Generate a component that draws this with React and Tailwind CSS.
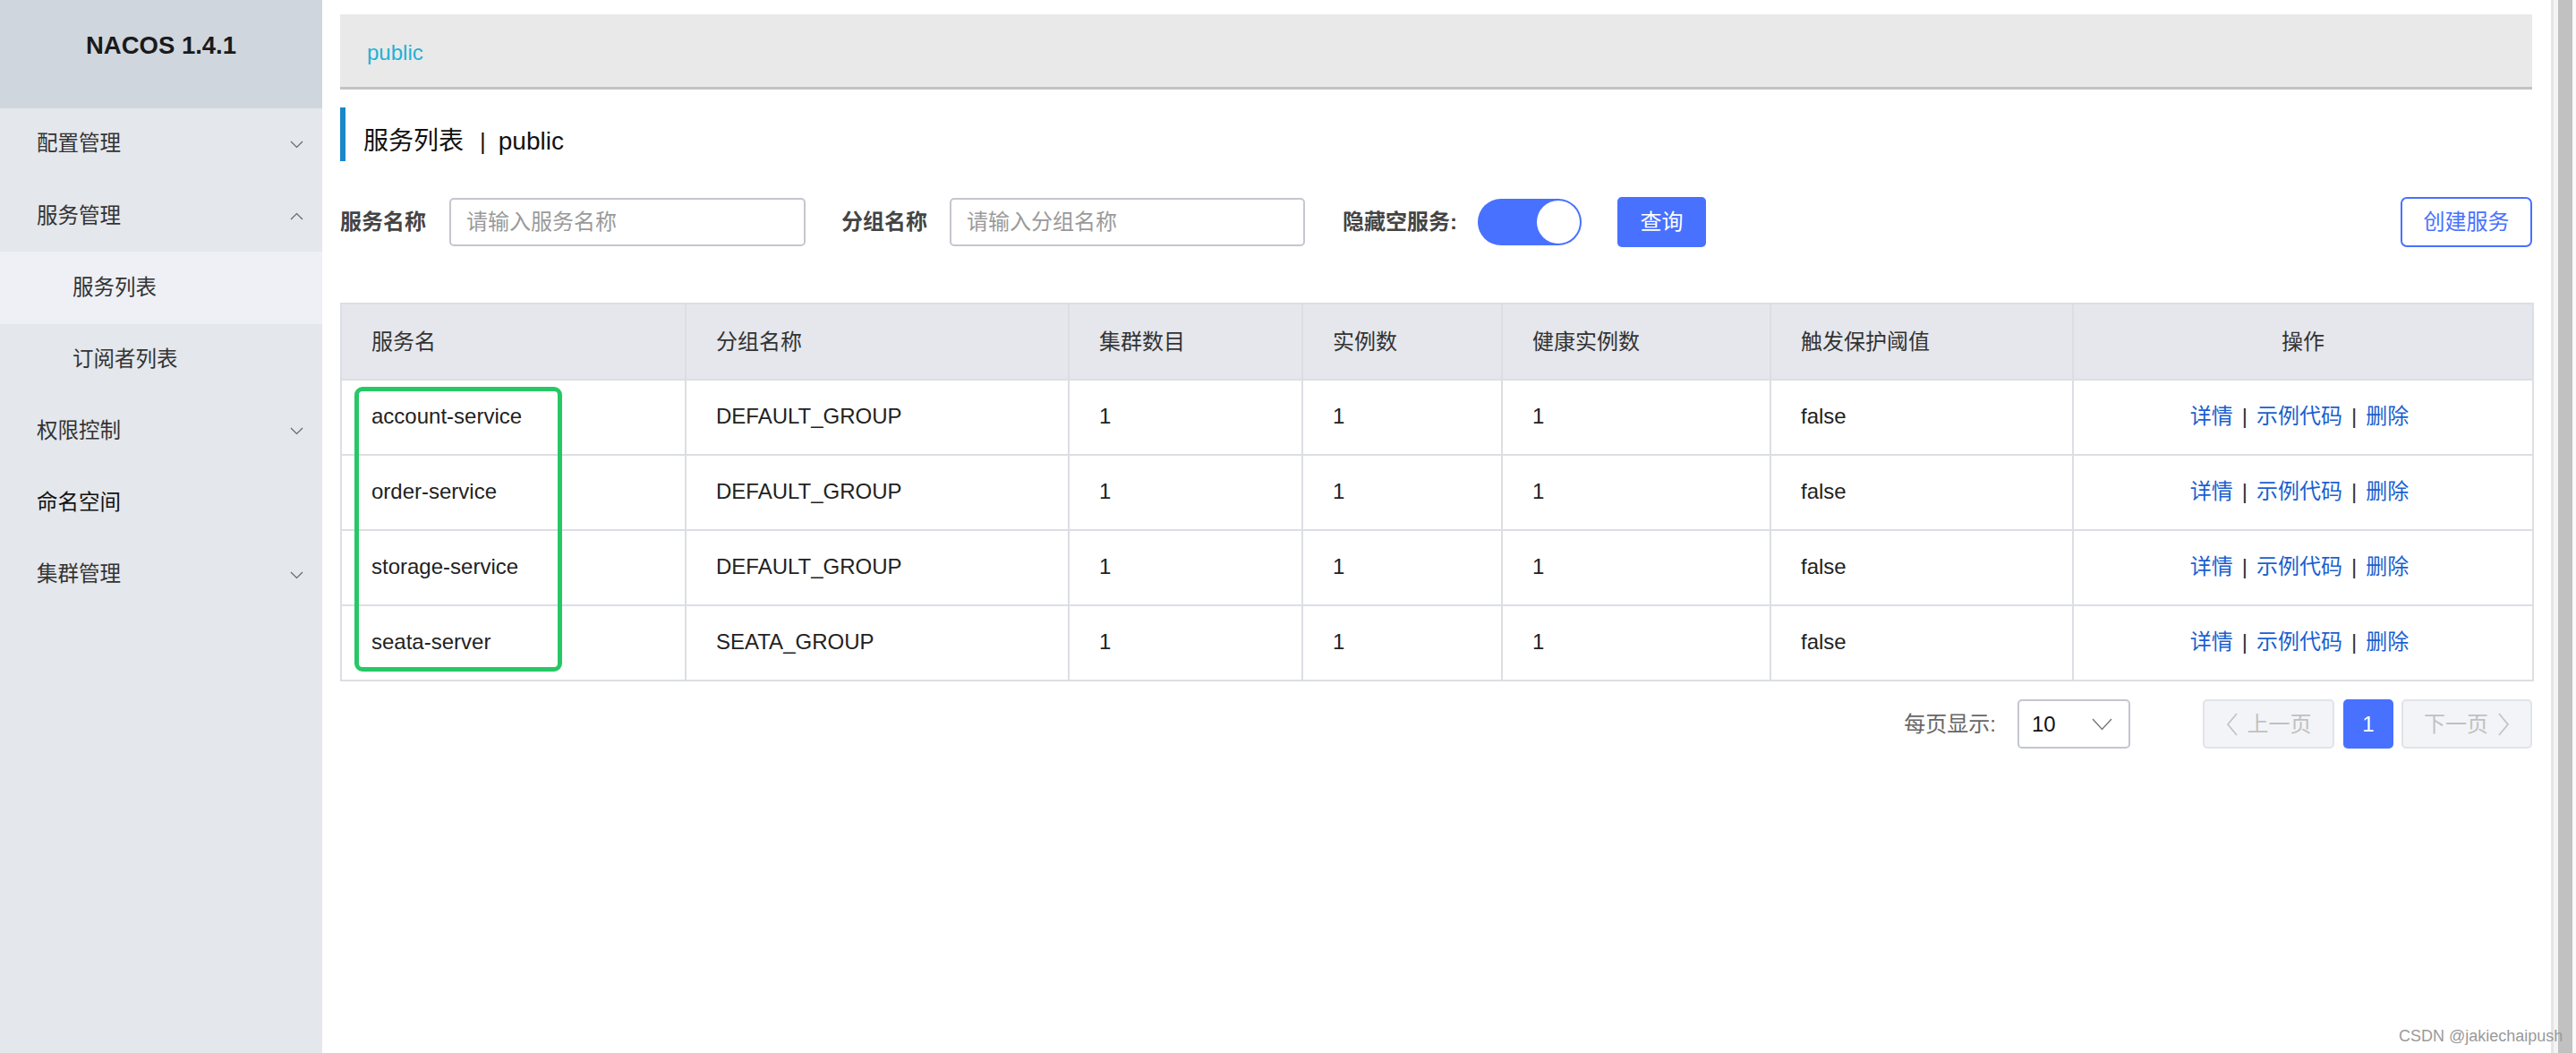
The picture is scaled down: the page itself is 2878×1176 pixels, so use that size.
import React from 'react';

const menu = [
    { label: '配置管理', arrow: 'down' },
    { label: '服务管理', arrow: 'up' },
    { label: '服务列表', sub: true, active: true },
    { label: '订阅者列表', sub: true },
    { label: '权限控制', arrow: 'down' },
    { label: '命名空间', dark: true },
    { label: '集群管理', arrow: 'down' },
];

const rows = [
    { name: 'account-service', group: 'DEFAULT_GROUP' },
    { name: 'order-service', group: 'DEFAULT_GROUP' },
    { name: 'storage-service', group: 'DEFAULT_GROUP' },
    { name: 'seata-server', group: 'SEATA_GROUP' },
];

const Chevron = ({ up }) => (
    <svg width="15" height="9" viewBox="0 0 15 9" fill="none" stroke="#666" strokeWidth="1.2">
        <polyline points={up ? '1,8 7.5,1.5 14,8' : '1,1 7.5,7.5 14,1'} />
    </svg>
);

const Sidebar = () => (
    <div className="w-[360px] shrink-0 h-full bg-[#e4e7ec] flex flex-col">
        <div className="h-[121px] bg-[#d0d6de] flex justify-center pt-[37px]">
            <span className="text-[27.5px] font-bold text-[#1a1a1a] leading-none">NACOS 1.4.1</span>
        </div>
        {menu.map((m) => (
            <div
                key={m.label}
                className={`h-[80.2px] flex items-center justify-between pr-[21px] ${m.sub ? 'pl-[81px]' : 'pl-[41px]'} ${m.active ? 'bg-[#eef0f5]' : ''}`}
            >
                <span className={`text-[23.5px] leading-none ${m.dark ? 'text-[#111]' : 'text-[#333]'}`}>{m.label}</span>
                {m.arrow && <Chevron up={m.arrow === 'up'} />}
            </div>
        ))}
    </div>
);

const cols = [385, 428, 261, 223, 300, 338, 514];
const heads = ['服务名', '分组名称', '集群数目', '实例数', '健康实例数', '触发保护阈值', '操作'];

const App = () => {
    return (
        <div className="relative flex w-full h-[1176px] bg-white overflow-hidden font-['Liberation_Sans','Noto_Sans_CJK_SC',sans-serif]">
            <Sidebar />

            <div className="flex-1 min-w-0 pl-[20px] pr-[21px] pt-[16px]">
                {/* breadcrumb */}
                <div className="h-[84px] bg-[#e9e9e9] border-b-[3px] border-[#c2c2c2] flex items-center pl-[30px] pt-[4px]">
                    <span className="text-[24px] text-[#1fb1d6] leading-none">public</span>
                </div>

                {/* title */}
                <div className="mt-[20px] h-[60px] border-l-[6px] border-[#1a87c8] flex items-center pl-[20px] pt-[16px] text-[28px] text-[#111] leading-none">
                    <span>服务列表</span>
                    <span className="ml-[18px] mr-[14px] text-[26px]">|</span>
                    <span>public</span>
                </div>

                {/* search row */}
                <div className="mt-[40px] h-[56px] flex items-center text-[24px]">
                    <span className="font-bold text-[#444] leading-none">服务名称</span>
                    <input
                        className="ml-[26px] w-[398px] h-[54px] border-2 border-[#c4c6cf] rounded-[5px] pl-[17px] outline-none placeholder:text-[#9a9a9a]"
                        placeholder="请输入服务名称"
                    />
                    <span className="ml-[40px] font-bold text-[#444] leading-none">分组名称</span>
                    <input
                        className="ml-[25px] w-[397px] h-[54px] border-2 border-[#c4c6cf] rounded-[5px] pl-[17px] outline-none placeholder:text-[#9a9a9a]"
                        placeholder="请输入分组名称"
                    />
                    <span className="ml-[42px] font-bold text-[#444] leading-none">隐藏空服务:</span>
                    <div className="ml-[23px] w-[116px] h-[52px] rounded-full bg-[#4871ff] flex items-center justify-end p-[2px]">
                        <div className="w-[48px] h-[48px] rounded-full bg-white" />
                    </div>
                    <button className="ml-[40px] w-[99px] h-[56px] rounded-[5px] bg-[#4871ff] text-white">查询</button>
                    <button className="ml-auto w-[147px] h-[56px] rounded-[7px] border-2 border-[#4871ff] text-[#4871ff]">创建服务</button>
                </div>

                {/* table */}
                <div className="relative mt-[62px]">
                    <table className="w-full table-fixed border-collapse text-[24px] leading-none">
                        <colgroup>
                            {cols.map((w, i) => (
                                <col key={i} style={{ width: w }} />
                            ))}
                        </colgroup>
                        <thead>
                            <tr className="bg-[#e5e7ec] h-[85px]">
                                {heads.map((h, i) => (
                                    <th
                                        key={h}
                                        className={`border-2 border-[#dcdee3] font-normal text-[#333] ${i === 6 ? 'text-center' : 'text-left pl-[33px]'}`}
                                    >
                                        {h}
                                    </th>
                                ))}
                            </tr>
                        </thead>
                        <tbody>
                            {rows.map((r) => (
                                <tr key={r.name} className="h-[84px] text-[#222]">
                                    <td className="border-2 border-[#dcdee3] pl-[33px] pb-[2px]">{r.name}</td>
                                    <td className="border-2 border-[#dcdee3] pl-[33px] pb-[2px]">{r.group}</td>
                                    <td className="border-2 border-[#dcdee3] pl-[33px] pb-[2px]">1</td>
                                    <td className="border-2 border-[#dcdee3] pl-[33px] pb-[2px]">1</td>
                                    <td className="border-2 border-[#dcdee3] pl-[33px] pb-[2px]">1</td>
                                    <td className="border-2 border-[#dcdee3] pl-[33px] pb-[2px]">false</td>
                                    <td className="border-2 border-[#dcdee3] text-center pb-[2px] pr-[8px]">
                                        <span className="text-[#1b5fcf]">详情</span>
                                        <span className="mx-[10px] text-[#333]">|</span>
                                        <span className="text-[#1b5fcf]">示例代码</span>
                                        <span className="mx-[10px] text-[#333]">|</span>
                                        <span className="text-[#1b5fcf]">删除</span>
                                    </td>
                                </tr>
                            ))}
                        </tbody>
                    </table>
                    {/* highlight annotation */}
                    <div className="absolute left-[16px] top-[94px] w-[232px] h-[318px] border-[5px] border-[#26c866] rounded-[9px] pointer-events-none" />
                </div>

                {/* pagination */}
                <div className="mt-[20px] flex items-center justify-end text-[24px] leading-none">
                    <span className="text-[#666]">每页显示:</span>
                    <div className="ml-[24px] w-[126px] h-[55px] border-2 border-[#c4c6cf] rounded-[5px] flex items-center justify-between pl-[14px] pr-[18px]">
                        <span className="text-[#111]">10</span>
                        <svg width="23" height="14" viewBox="0 0 23 14" fill="none" stroke="#777" strokeWidth="1.4">
                            <polyline points="1,1 11.5,12.5 22,1" />
                        </svg>
                    </div>
                    <div className="ml-[81px] w-[147px] h-[55px] bg-[#f3f4f7] border-2 border-[#e1e3e8] rounded-[5px] flex items-center justify-center gap-[10px] text-[#c0c0c0]">
                        <svg width="14" height="26" viewBox="0 0 14 26" fill="none" stroke="#c0c0c0" strokeWidth="1.6">
                            <polyline points="12,1 2,13 12,25" />
                        </svg>
                        <span>上一页</span>
                    </div>
                    <div className="ml-[10px] w-[56px] h-[55px] bg-[#4871ff] rounded-[5px] flex items-center justify-center text-white">1</div>
                    <div className="ml-[9px] w-[146px] h-[55px] bg-[#f3f4f7] border-2 border-[#e1e3e8] rounded-[5px] flex items-center justify-center gap-[10px] text-[#c0c0c0]">
                        <span>下一页</span>
                        <svg width="14" height="26" viewBox="0 0 14 26" fill="none" stroke="#c0c0c0" strokeWidth="1.6">
                            <polyline points="2,1 12,13 2,25" />
                        </svg>
                    </div>
                </div>
            </div>

            {/* scrollbar */}
            <div className="w-[28px] shrink-0 h-full flex">
                <div className="w-[3px] bg-[#e5e5e5]" />
                <div className="w-[5px] bg-[#f4f4f4]" />
                <div className="w-[16px] bg-[#c1c1c1]" />
                <div className="w-[4px] bg-[#fafafa]" />
            </div>

            <span className="absolute left-[2680px] top-[1146px] text-[18px] leading-[22px] text-[#9a9a9a]">CSDN @jakiechaipush</span>
        </div>
    );
};

export default App;
